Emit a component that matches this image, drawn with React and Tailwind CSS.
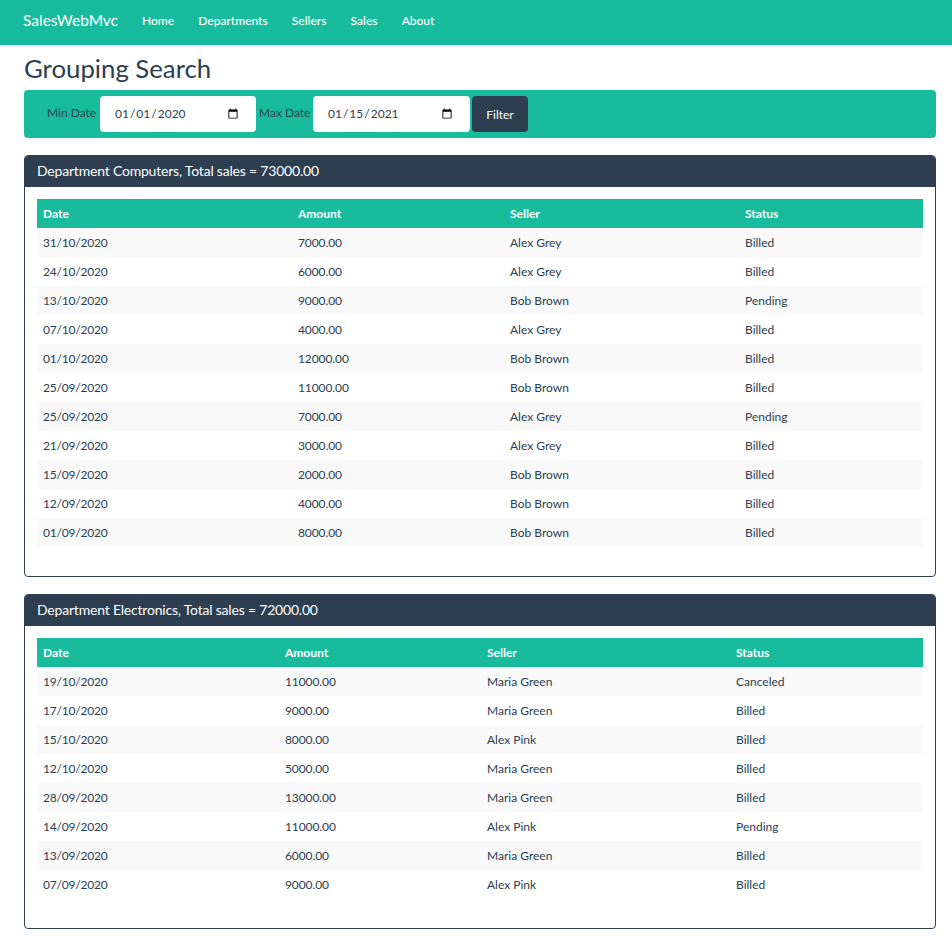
import React from 'react';

const computers = [
  ['31/10/2020', '7000.00', 'Alex Grey', 'Billed'],
  ['24/10/2020', '6000.00', 'Alex Grey', 'Billed'],
  ['13/10/2020', '9000.00', 'Bob Brown', 'Pending'],
  ['07/10/2020', '4000.00', 'Alex Grey', 'Billed'],
  ['01/10/2020', '12000.00', 'Bob Brown', 'Billed'],
  ['25/09/2020', '11000.00', 'Bob Brown', 'Billed'],
  ['25/09/2020', '7000.00', 'Alex Grey', 'Pending'],
  ['21/09/2020', '3000.00', 'Alex Grey', 'Billed'],
  ['15/09/2020', '2000.00', 'Bob Brown', 'Billed'],
  ['12/09/2020', '4000.00', 'Bob Brown', 'Billed'],
  ['01/09/2020', '8000.00', 'Bob Brown', 'Billed'],
];

const electronics = [
  ['19/10/2020', '11000.00', 'Maria Green', 'Canceled'],
  ['17/10/2020', '9000.00', 'Maria Green', 'Billed'],
  ['15/10/2020', '8000.00', 'Alex Pink', 'Billed'],
  ['12/10/2020', '5000.00', 'Maria Green', 'Billed'],
  ['28/09/2020', '13000.00', 'Maria Green', 'Billed'],
  ['14/09/2020', '11000.00', 'Alex Pink', 'Pending'],
  ['13/09/2020', '6000.00', 'Maria Green', 'Billed'],
  ['07/09/2020', '9000.00', 'Alex Pink', 'Billed'],
];

const Department = ({ title, rows, cols }) => (
  <div className="border border-[#2c3e50] rounded-[4px] overflow-hidden mb-[17px]">
    <div className="bg-[#2c3e50] text-white text-[14px] tracking-[-0.2px] h-[31px] px-3 leading-[29px]">{title}</div>
    <div className="px-3 pt-3 pb-[29px]">
      <table className="w-full table-fixed border-collapse text-[12px]">
        <colgroup>
          {cols.map((c, i) => (
            <col key={i} style={{ width: c }} />
          ))}
        </colgroup>
        <thead>
          <tr className="bg-[#18bc9c] text-white h-[29px]">
            <th className="px-1.5 text-left font-bold">Date</th>
            <th className="px-1.5 text-left font-bold">Amount</th>
            <th className="px-1.5 text-left font-bold">Seller</th>
            <th className="px-1.5 text-left font-bold">Status</th>
          </tr>
        </thead>
        <tbody>
          {rows.map((r, i) => (
            <tr key={i} className={i % 2 === 0 ? 'h-[29px] bg-[#f9f9f9]' : 'h-[29px]'}>
              {r.map((v, j) => (
                <td
                  key={j}
                  className={
                    j === 0
                      ? 'px-1.5 pt-[1px] text-left tracking-[-0.2px]'
                      : j === 1
                        ? 'px-1.5 pt-[1px] text-left tracking-[-0.1px]'
                        : 'px-1.5 pt-[1px] text-left'
                  }
                >
                  {v}
                </td>
              ))}
            </tr>
          ))}
        </tbody>
      </table>
    </div>
  </div>
);

const App = () => {
  return (
    <div className="min-h-screen bg-white text-[#2c3e50] font-['Lato',sans-serif]">
      <nav className="bg-[#18bc9c] h-[45px] flex items-center px-[23px] pb-[4px] text-white">
        <span className="text-[15.5px] mr-[24px]">SalesWebMvc</span>
        <ul className="flex gap-[24.2px] text-[12px] font-medium">
          <li>Home</li>
          <li>Departments</li>
          <li>Sellers</li>
          <li>Sales</li>
          <li>About</li>
        </ul>
      </nav>

      <main className="pl-[24px] pr-[16px]">
        <h1 className="text-[25.75px] leading-[34px] mt-[6px] mb-[5px]">Grouping Search</h1>

        <form className="bg-[#18bc9c] rounded-[4px] h-[48px] flex items-center pl-[23px] mb-[17px] text-[12px]">
          <label className="mr-[3px] -mt-[2px] w-[50px] whitespace-nowrap">Min Date</label>
          <input
            type="date"
            defaultValue="2020-01-01"
            className="bg-white rounded-[4px] w-[156px] h-[36px] pl-[14px] pr-[15px] text-[12px] text-[#2c3e50] outline-none"
          />
          <label className="ml-[3px] mr-[2px] -mt-[2px] w-[52px] whitespace-nowrap">Max Date</label>
          <input
            type="date"
            defaultValue="2021-01-15"
            className="bg-white rounded-[4px] w-[157px] h-[36px] pl-[14px] pr-[15px] text-[12px] text-[#2c3e50] outline-none"
          />
          <button type="button" className="bg-[#2c3e50] text-white rounded-[4px] w-[56px] h-[36px] ml-[2px] pt-[2px] text-[12px]">
            Filter
          </button>
        </form>

        <Department title="Department Computers, Total sales = 73000.00" rows={computers} cols={[255, 212, 235, 184]} />
        <Department title="Department Electronics, Total sales = 72000.00" rows={electronics} cols={[242, 202, 249, 193]} />
      </main>
    </div>
  );
};

export default App;
